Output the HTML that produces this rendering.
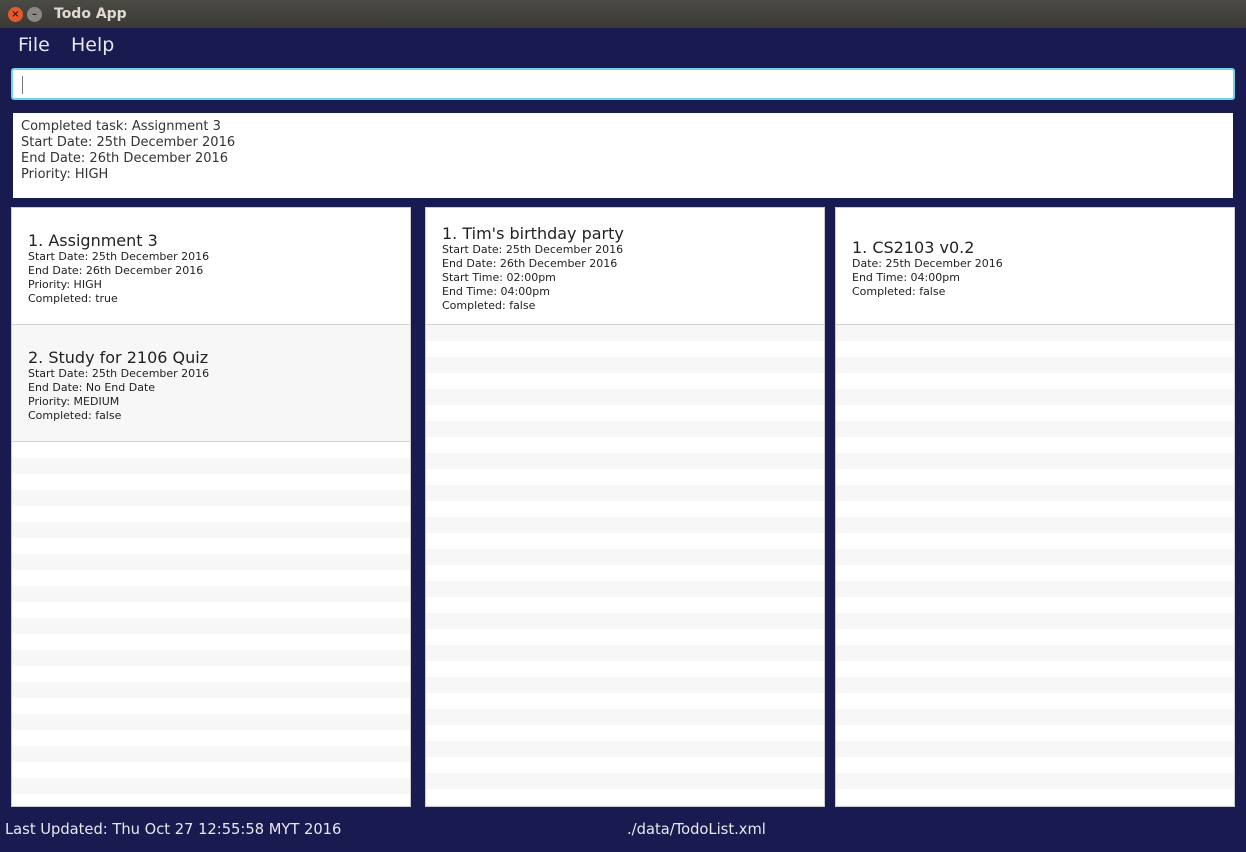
<!DOCTYPE html>
<html><head><style>
*{margin:0;padding:0;box-sizing:border-box}
body{width:1246px;height:845px;background:#191a50;font-family:"DejaVu Sans","Liberation Sans",sans-serif;position:relative;overflow:hidden}
.tb{position:absolute;left:0;top:0;width:1246px;height:28px;background:linear-gradient(#4b4a45,#3a3935);color:#dfdbd2;font-weight:bold;font-size:14px}
.tb span{position:absolute;left:54px;top:6px}
.c{position:absolute;top:7px;width:15px;height:15px;border-radius:50%;font-size:10px;line-height:15px;text-align:center;color:#3a1a10}
.menu{position:absolute;top:34px;color:#e8e8f0;font-size:19px}
.inp{position:absolute;left:11px;top:68px;width:1224px;height:32px;background:#fff;border:2px solid #6fd3ee;border-radius:3px}
.inp i{position:absolute;left:9px;top:6px;width:1px;height:18px;background:#777}
.res{position:absolute;left:13px;top:113px;width:1220px;height:85px;background:#fff;font-size:13px;line-height:16px;color:#333;padding:6px 8px}
.p{position:absolute;top:207px;width:400px;height:600px;border:1px solid #ccc;background:#fff;overflow:hidden}
.cell{position:absolute;left:0;width:398px;height:117px;border-bottom:1px solid #d4d4d4;padding-left:16px;color:#222}
.cell h{display:block;font-size:16px;line-height:18px}
.cell div{font-size:11px;line-height:14px}
.st{position:absolute;height:31px;font-size:14.7px;color:#e8e8f0;top:821px}
</style></head><body>
<div class="tb"><div class="c" style="left:8px;background:#e9582b">×</div><div class="c" style="left:27px;background:#8a8883">–</div><span>Todo App</span></div>
<div class="menu" style="left:18px">File</div><div class="menu" style="left:71px">Help</div>
<div class="inp"><i></i></div>
<div class="res">Completed task: Assignment 3<br>Start Date: 25th December 2016<br>End Date: 26th December 2016<br>Priority: HIGH</div>

<div class="p" style="left:11px;background:repeating-linear-gradient(#fff 0 16px,#f7f7f7 16px 32px);background-position:0 234px">
<div class="cell" style="top:0;background:#fff;padding-top:24px"><h>1. Assignment 3</h><div>Start Date: 25th December 2016<br>End Date: 26th December 2016<br>Priority: HIGH<br>Completed: true</div></div>
<div class="cell" style="top:117px;background:#f7f7f7;padding-top:24px"><h>2. Study for 2106 Quiz</h><div>Start Date: 25th December 2016<br>End Date: No End Date<br>Priority: MEDIUM<br>Completed: false</div></div>
</div>

<div class="p" style="left:425px;background:repeating-linear-gradient(#f7f7f7 0 16px,#fff 16px 32px);background-position:0 117px">
<div class="cell" style="top:0;background:#fff;padding-top:17px"><h>1. Tim's birthday party</h><div>Start Date: 25th December 2016<br>End Date: 26th December 2016<br>Start Time: 02:00pm<br>End Time: 04:00pm<br>Completed: false</div></div>
</div>

<div class="p" style="left:835px;background:repeating-linear-gradient(#f7f7f7 0 16px,#fff 16px 32px);background-position:0 117px">
<div class="cell" style="top:0;background:#fff;padding-top:31px"><h>1. CS2103 v0.2</h><div>Date: 25th December 2016<br>End Time: 04:00pm<br>Completed: false</div></div>
</div>

<div class="st" style="left:5px">Last Updated: Thu Oct 27 12:55:58 MYT 2016</div>
<div class="st" style="left:627px">./data/TodoList.xml</div>
</body></html>
